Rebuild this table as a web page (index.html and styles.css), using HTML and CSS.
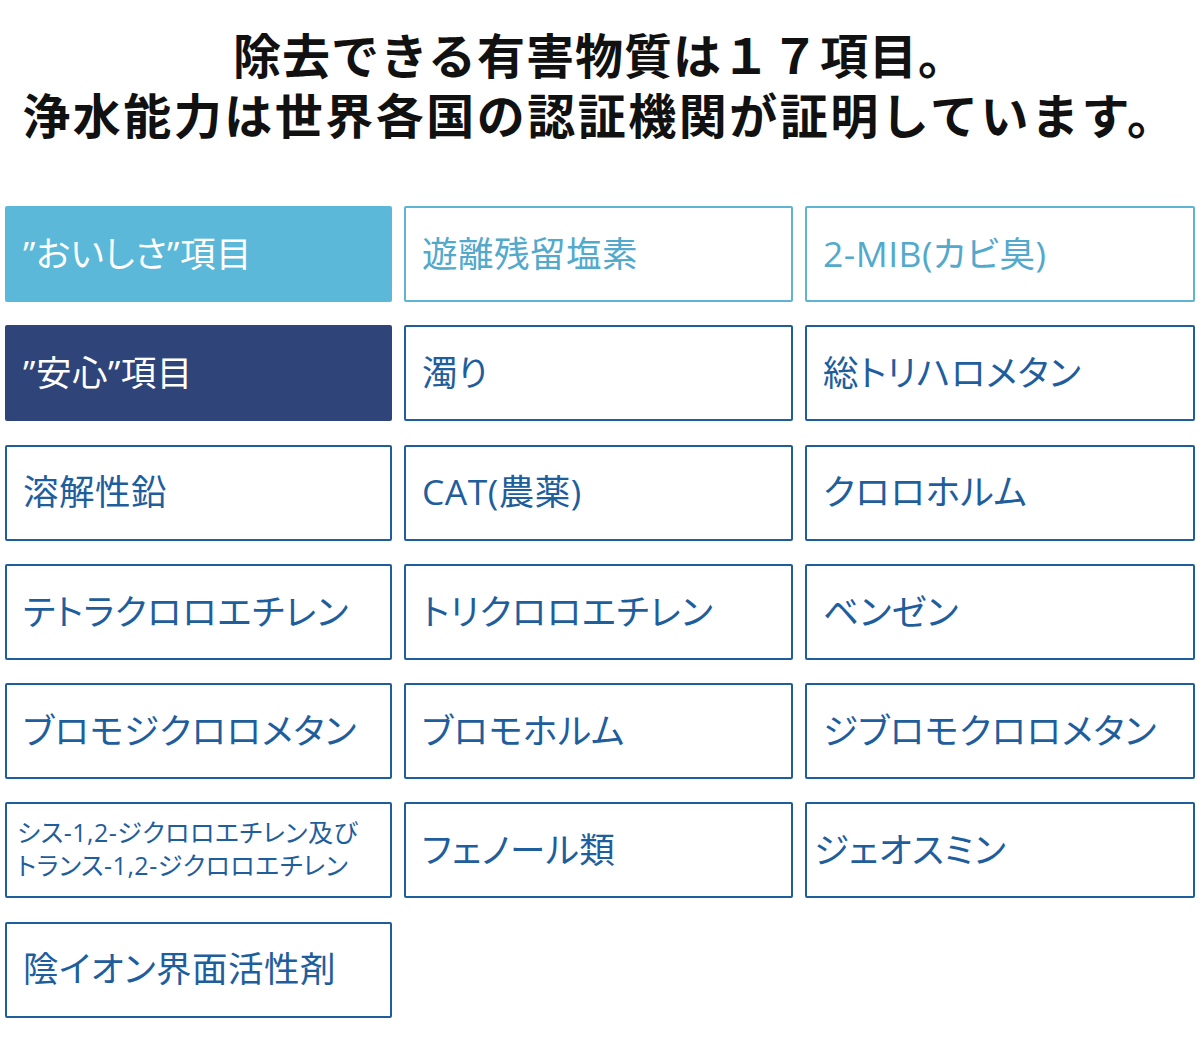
FILE: index.html
```html
<!DOCTYPE html>
<html lang="ja">
<head>
<meta charset="utf-8">
<link rel="stylesheet" href="styles.css">
</head>
<body>
<div class="page">
  <h1 class="title"><span class="line line1">除去できる有害物質は１７項目。</span><span class="line line2">浄水能力は世界各国の認証機関が証明しています。</span></h1>
  <div class="grid">
    <div class="cell label-taste">”おいしさ”項目</div>
    <div class="cell taste">遊離残留塩素</div>
    <div class="cell taste">2-MIB(カビ臭)</div>
    <div class="cell label-safe">”安心”項目</div>
    <div class="cell">濁り</div>
    <div class="cell">総トリハロメタン</div>
    <div class="cell">溶解性鉛</div>
    <div class="cell">CAT(農薬)</div>
    <div class="cell">クロロホルム</div>
    <div class="cell">テトラクロロエチレン</div>
    <div class="cell">トリクロロエチレン</div>
    <div class="cell">ベンゼン</div>
    <div class="cell">ブロモジクロロメタン</div>
    <div class="cell">ブロモホルム</div>
    <div class="cell">ジブロモクロロメタン</div>
    <div class="cell small">シス-1,2-ジクロロエチレン及び<br>トランス-1,2-ジクロロエチレン</div>
    <div class="cell">フェノール類</div>
    <div class="cell tight">ジェオスミン</div>
    <div class="cell">陰イオン界面活性剤</div>
  </div>
</div>
</body>
</html>
```
FILE: styles.css
```css
html, body {
  margin: 0;
  padding: 0;
  background: #ffffff;
}
.page {
  width: 1200px;
  padding: 0 5px;
  box-sizing: border-box;
  font-family: "Open Sans", "Noto Sans CJK JP", sans-serif;
}
.title {
  margin: 0;
  padding-top: 23px;
  text-align: center;
  font-family: "Noto Sans CJK JP", sans-serif;
  font-weight: 700;
  font-size: 48px;
  line-height: 60px;
  color: #111111;
}
.line {
  display: block;
}
.line1 {
  letter-spacing: 1px;
}
.line2 {
  letter-spacing: 2.5px;
}
.grid {
  margin-top: 63px;
  display: grid;
  grid-template-columns: 387px 389px 390px;
  column-gap: 12px;
  grid-auto-rows: 96px;
  row-gap: 23.3px;
}
.cell {
  box-sizing: border-box;
  border: 2px solid #1f5e9d;
  border-radius: 2px;
  color: #1f5e9d;
  display: flex;
  align-items: center;
  padding: 0 0 2px 16px;
  font-size: 35.5px;
  line-height: 1.2;
  white-space: nowrap;
  font-feature-settings: "palt";
  letter-spacing: 0.5px;
}
.cell.taste {
  border-color: #5fb3d3;
  color: #52a9cc;
}
.label-taste {
  background: #5bb8d9;
  border-color: #5bb8d9;
  color: #ffffff;
}
.label-safe {
  background: #2f4479;
  border-color: #2f4479;
  color: #ffffff;
}
.cell.small {
  font-size: 25px;
  line-height: 33px;
  padding-left: 10px;
}
.cell.tight {
  padding-left: 7px;
}
```
